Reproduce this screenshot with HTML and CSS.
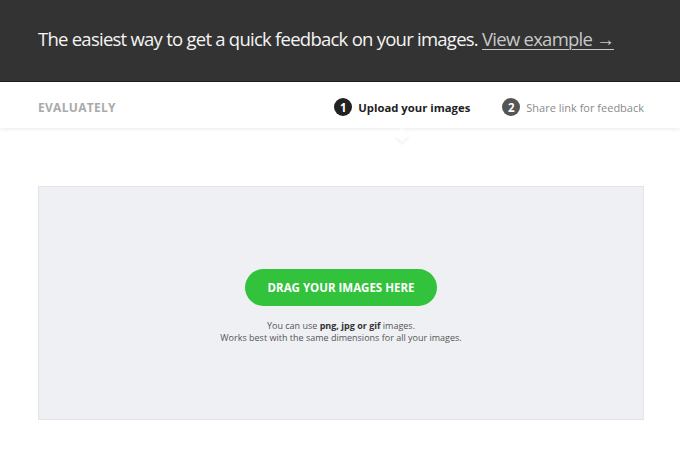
FILE: index.html
```html
<!DOCTYPE html>
<html>
<head>
    <meta charset="UTF-8">
    <title>Evaluately</title>
    <link rel="stylesheet" href="styles.css">
</head>
<body>
    <header class="hero">
        <p>The easiest way to get a quick feedback on your images. <a href="#">View example &rarr;</a></p>
    </header>

    <nav class="steps-bar">
        <div class="logo">EVALUATELY</div>
        <div class="steps">
            <div class="step active"><span class="num">1</span>Upload your images</div>
            <div class="step"><span class="num">2</span>Share link for feedback</div>
        </div>
    </nav>

    <main class="container">
        <div class="dropzone">
            <button class="drag-btn">DRAG YOUR IMAGES HERE</button>
            <p class="hint">You can use <b>png, jpg or gif</b> images.<br>Works best with the same dimensions for all your images.</p>
        </div>
    </main>
</body>
</html>
```

FILE: styles.css
```css
* {
    box-sizing: border-box;
    margin: 0;
    padding: 0;
}

body {
    font-family: 'Open Sans', 'Liberation Sans', sans-serif;
    background: #fff;
    color: #333;
}

.hero {
    background: #333333;
    height: 82px;
    border-bottom: 1px solid #1e1e1e;
    padding: 25px 38px 0;
}

.hero p {
    color: #f4f4f4;
    font-size: 18.5px;
    font-weight: 400;
    letter-spacing: -0.75px;
    line-height: 28px;
    white-space: nowrap;
}

.hero a {
    color: #c8c8c8;
    text-decoration: underline;
    text-underline-offset: 3px;
    text-decoration-thickness: 1px;
}

.steps-bar {
    height: 46px;
    display: flex;
    align-items: center;
    justify-content: space-between;
    padding: 4px 36px 0 38px;
    box-shadow: 0 2px 3px rgba(0, 0, 0, 0.06);
    position: relative;
}

.logo {
    color: #aaaaaa;
    font-size: 12px;
    font-weight: 700;
    letter-spacing: 0.3px;
}

.steps {
    display: flex;
    gap: 32px;
}

.step {
    display: flex;
    align-items: center;
    font-size: 11px;
    color: #8a8a8a;
    position: relative;
}

.step.active {
    color: #1e1e1e;
    font-size: 11.3px;
    font-weight: 700;
}

.step.active::after {
    content: "";
    position: absolute;
    left: 50%;
    bottom: -24px;
    width: 10px;
    height: 10px;
    background: #fff;
    transform: translateX(-50%) rotate(45deg);
    box-shadow: 2px 2px 3px rgba(0, 0, 0, 0.05);
}

.num {
    width: 18px;
    height: 18px;
    border-radius: 50%;
    background: #555;
    color: #fff;
    font-size: 11.5px;
    font-weight: 700;
    display: flex;
    align-items: center;
    justify-content: center;
    margin-right: 6px;
}

.step.active .num {
    background: #222;
}

.container {
    padding: 58px 36px 0 38px;
}

.dropzone {
    height: 234px;
    background: #eef0f4;
    border: 1px solid #e2e4e8;
    display: flex;
    flex-direction: column;
    align-items: center;
    padding-top: 82px;
}

.drag-btn {
    width: 192px;
    height: 37px;
    border: none;
    border-radius: 19px;
    background: #33c23b;
    color: #fff;
    font-family: inherit;
    font-size: 11.5px;
    font-weight: 700;
}

.hint {
    margin-top: 14px;
    text-align: center;
    font-size: 9px;
    line-height: 12px;
    color: #555;
}

.hint b {
    color: #333;
}
```
